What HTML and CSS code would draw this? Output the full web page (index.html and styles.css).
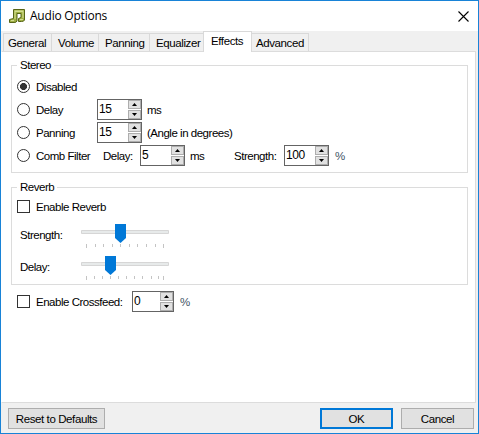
FILE: index.html
```
<!DOCTYPE html>
<html lang="en"><head><meta charset="utf-8"><title>Audio Options</title><link rel="stylesheet" href="styles.css"></head>
<body>
<div class="window">
  <header class="titlebar">
    <svg class="logo" width="17" height="16" viewBox="0 0 17 16"><path d="M4.500 1.500H15.500V12Q15 13.500 12.500 13.500H9.500V10.500L12 9.500V5.500H8V13Q7.500 14.500 5 14.500H.5V11.500L4.500 10.500z" fill="#a0b045" stroke="#566416"/><path d="M5.500 2.500h9v1.500h-9zM5.500 4h1v7h-1zM13.500 4h1v6h-1zM2 12h3v1H2zM11 11h3v1h-3z" fill="#d3dd91"/></svg>
    <h1>Audio Options</h1>
    <svg class="close" width="11" height="11" viewBox="0 0 11 11"><path d="M.5.5l10 10M10.500.5l-10 10" stroke="#000" stroke-width="1.100"/></svg>
  </header>
  <nav class="tabs">
    <div class="tab general"><span>General</span></div><div class="tab volume"><span>Volume</span></div><div class="tab panning"><span>Panning</span></div><div class="tab equalizer"><span>Equalizer</span></div><div class="tab effects selected"><span>Effects</span></div><div class="tab advanced"><span>Advanced</span></div>
  </nav>
  <main class="panel">
    <section class="group stereo">
      <h2>Stereo</h2>
      <div class="row"><i class="radio checked"></i><span class="name">Disabled</span></div>
      <div class="row"><i class="radio"></i><span class="name short">Delay</span><div class="spin"><b>15</b><i class="up"></i><i class="down"></i></div><span class="unit">ms</span></div>
      <div class="row"><i class="radio"></i><span class="name short">Panning</span><div class="spin"><b>15</b><i class="up"></i><i class="down"></i></div><span class="unit">(Angle in degrees)</span></div>
      <div class="row"><i class="radio"></i><span class="name comb">Comb Filter</span><span class="delay">Delay:</span><div class="spin"><b>5</b><i class="up"></i><i class="down"></i></div><span class="unit ms">ms</span><span class="strength">Strength:</span><div class="spin"><b>100</b><i class="up"></i><i class="down"></i></div><span class="unit percent">%</span></div>
    </section>
    <section class="group reverb">
      <h2>Reverb</h2>
      <div class="row"><i class="check"></i><span class="name">Enable Reverb</span></div>
      <div class="slider-row"><span>Strength:</span><svg width="90" height="26" viewBox="0 0 90 26"><path d="M.5 6.500h87v3H.5z" fill="#e7eaea" stroke="#d6d6d6"/><path d="M34 0h11v14l-5.500 5-5.500-5z" fill="#0078d7"/><path d="M5.500 20v4M14.500 20v3M22.500 20v3M31.500 20v3M39.500 20v3M48.500 20v3M56.500 20v3M65.500 20v3M74.500 20v3M82.500 20v4" stroke="#c4c4c4"/></svg></div>
      <div class="slider-row"><span>Delay:</span><svg width="90" height="26" viewBox="0 0 90 26"><path d="M.5 6.500h87v3H.5z" fill="#e7eaea" stroke="#d6d6d6"/><path d="M24 0h11v14l-5.500 5-5.500-5z" fill="#0078d7"/><path d="M5.500 20v4M13.500 20v3M21.500 20v3M29.500 20v3M37.500 20v3M45.500 20v3M53.500 20v3M61.500 20v3M70.500 20v3M77.500 20v3M82.500 20v4" stroke="#c4c4c4"/></svg></div>
    </section>
    <div class="row crossfeed"><i class="check"></i><span class="name cross">Enable Crossfeed:</span><div class="spin narrow"><b>0</b><i class="up"></i><i class="down"></i></div><span class="unit percent">%</span></div>
  </main>
  <footer><button class="reset">Reset to Defaults</button><button class="ok">OK</button><button class="cancel">Cancel</button></footer>
</div>
</body></html>
```
FILE: styles.css
```
* { box-sizing: border-box; }
body { margin: 0; font: 11.500px/14px "Liberation Sans", sans-serif; letter-spacing: -.48px; color: #000; }
.window { width: 479px; height: 434px; border: 1px solid #1883d7; background: #f0f0f0; display: flex; flex-direction: column; }
.titlebar { height: 30px; background: #fff; display: flex; align-items: center; padding: 0 9px 0 8px; flex: none; }
.titlebar h1 { font: 12px/16px "Open Sans", sans-serif; letter-spacing: -.22px; margin: 0 auto 0 4px; }
.tabs { height: 21px; display: flex; align-items: flex-end; padding-left: 2px; flex: none; margin-bottom: -1px; }
.tab { height: 19px; border: 1px solid #d9d9d9; border-right: 0; border-bottom: 0; padding: 2px 0 0 4px; white-space: nowrap; letter-spacing: -.4px; }
.general { width: 48px; }
.volume { width: 47px; padding-left: 6px; }
.panning { width: 51px; padding-left: 6px; }
.equalizer { width: 54px; padding-left: 6px; }
.effects { width: 49px; padding-left: 7px; }
.advanced { width: 57px; border-left: 0; border-right: 1px solid #d9d9d9; }
.tab.selected { height: 21px; background: #fff; border-right: 1px solid #d9d9d9; position: relative; z-index: 1; }
.panel { height: 352px; margin: 0 2px 0 0; background: #fff; border: 1px solid #dcdcdc; border-left-color: #fff; padding: 13px 7px 0 9px; flex: none; }
.group { border: 1px solid #dcdcdc; }
.group h2 { font: inherit; margin: -8px 0 0 5px; padding: 0 3px; background: #fff; width: max-content; height: 14px; }
.stereo { height: 108px; }
.stereo h2 { margin-bottom: 3px; }
.reverb { height: 98px; margin-top: 14px; }
.row { display: flex; align-items: center; height: 23px; padding-left: 5px; white-space: nowrap; }
.radio, .check { width: 13px; height: 13px; border: 1px solid #333; background: #fff; flex: none; }
.radio { border-radius: 50%; }
.checked { background: radial-gradient(circle, #333 3.200px, #fff 3.800px); }
.name { margin-left: 6px; padding-top: 1px; }
.delay, .strength, .unit { padding-top: 1px; }
.short { width: 61px; }
.comb { width: 67px; }
.delay { width: 37px; }
.strength { width: 50px; }
.unit { margin-left: 5px; }
.ms { width: 44px; }
.percent { margin-left: 6px; color: #456; }
.cross { width: 96px; }
.spin { width: 45px; height: 21px; border: 1px solid #646464; background: #fff; display: grid; grid-template: 9px 9px / 1fr 13px; row-gap: 1px; column-gap: 0; flex: none; }
.spin b { font-size: 12px; font-weight: 400; grid-row: span 2; padding: 2px 0 0 1px; }
.narrow { width: 42px; }
.up, .down { background: #e1e1e1; border: 1px solid #adadad; display: flex; align-items: center; justify-content: center; }
.up::before, .down::before { content: ""; width: 5px; height: 3px; background: #000; clip-path: polygon(50% 0, 100% 100%, 0 100%); }
.down::before { clip-path: polygon(0 0, 100% 0, 50% 100%); }
.slider-row { display: flex; height: 32px; padding-left: 8px; }
.slider-row span { width: 61px; padding-top: 4px; }
.reverb h2 { margin-bottom: 1px; }
.reverb .row { margin-bottom: 6px; }
.crossfeed { margin-top: 5px; padding-left: 6px; }
footer { display: flex; padding: 5px 4px 0 7px; }
button { height: 21px; padding: 0; border: 1px solid #adadad; background: #e1e1e1; font: inherit; letter-spacing: -.4px; color: #000; }
.reset { width: 97px; margin-right: auto; }
.ok { width: 73px; border: 2px solid #0078d7; margin-right: 8px; }
.cancel { width: 73px; }
```
